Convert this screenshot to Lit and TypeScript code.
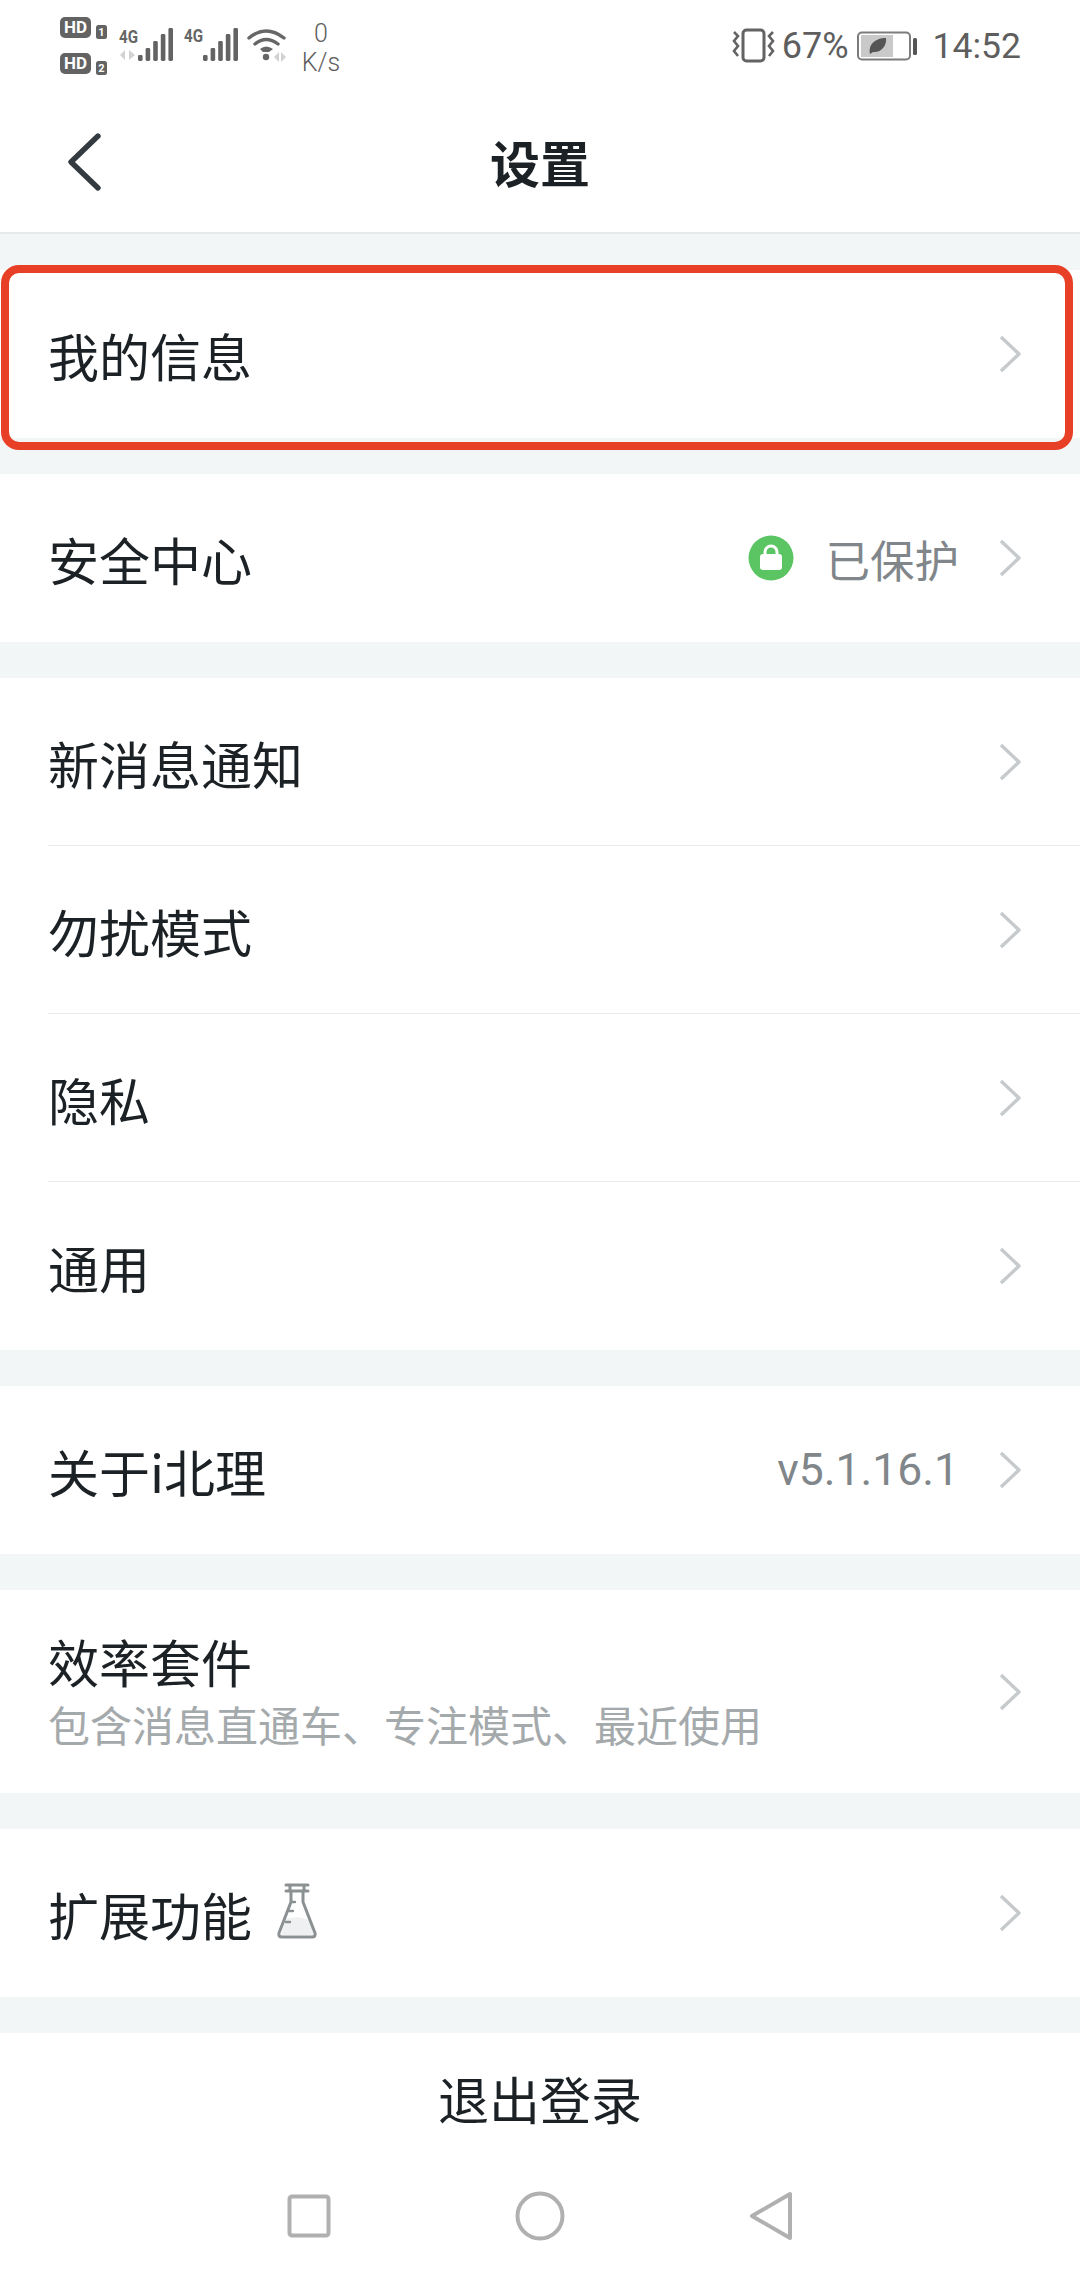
import { LitElement, html, css, svg, nothing } from 'lit';
import { customElement } from 'lit/decorators.js';

const chevron = html`<svg class="chevron" width="24" height="40" viewBox="0 0 24 40">
  <path d="M3 3 L21 20 L3 37" fill="none" stroke="#c6cacc" stroke-width="3.4" stroke-linejoin="round"/>
</svg>`;

const lockBadge = html`<svg class="lock" width="46" height="46" viewBox="0 0 46 46">
  <circle cx="23" cy="23" r="22.5" fill="#5cc563"/>
  <path d="M17 20 v-3 a6 6 0 0 1 12 0 v3" fill="none" stroke="#fff" stroke-width="3"/>
  <rect x="12" y="19" width="22" height="16" rx="3" fill="#fff"/>
</svg>`;

const flask = html`<svg class="flask" width="42" height="58" viewBox="0 0 42 58">
  <path d="M10 3 H32 M14 3 V9 M28 3 V9 M10 9 H32" fill="none" stroke="#8b9092" stroke-width="3" stroke-linecap="round"/>
  <path d="M10 37 Q21 33 33 38 L38 53 H5 Z" fill="#eef0f1"/>
  <path d="M15 9 V20 L3 51 Q2 55 6 55 H36 Q40 55 39 51 L27 20 V9" fill="none" stroke="#8b9092" stroke-width="3" stroke-linejoin="round"/>
  <path d="M15 20 H19 M13 29 H17 M10 40 H14" stroke="#8b9092" stroke-width="2.4" stroke-linecap="round"/>
</svg>`;

// signal bars, x is the leftmost bar
const bars = (x: number) => svg`${[55, 48, 41, 34, 28].map(
  (top, i) => svg`<rect x=${x + i * 7.6} y=${top} width="4.6" height=${61 - top} rx="1.4" fill="#636363"/>`
)}`;

const statusLeft = html`<svg class="status-left" width="236" height="66" viewBox="56 12 236 66">
  <g font-family="Roboto, sans-serif" font-weight="700">
    <rect x="60" y="17" width="31" height="21" rx="5" fill="#636363"/>
    <text x="75.5" y="33" font-size="17" fill="#fff" text-anchor="middle">HD</text>
    <rect x="96" y="25" width="11" height="14" rx="2.5" fill="#636363"/>
    <text x="101.5" y="36" font-size="11" fill="#fff" text-anchor="middle">1</text>
    <rect x="60" y="53" width="31" height="21" rx="5" fill="#636363"/>
    <text x="75.5" y="69" font-size="17" fill="#fff" text-anchor="middle">HD</text>
    <rect x="96" y="61" width="11" height="14" rx="2.5" fill="#636363"/>
    <text x="101.5" y="72" font-size="11" fill="#fff" text-anchor="middle">2</text>
    <text x="119" y="43" font-size="19" fill="#666" textLength="19" lengthAdjust="spacingAndGlyphs">4G</text>
    <text x="184" y="42" font-size="19" fill="#666" textLength="19" lengthAdjust="spacingAndGlyphs">4G</text>
  </g>
  <path d="M120 55 L125 50 V60 Z M135 55 L129 50 V60 Z" fill="#d2d2d2"/>
  ${bars(138)}
  ${bars(203)}
  <g fill="none" stroke="#666" stroke-width="3.4" stroke-linecap="round">
    <path d="M249 38 Q266 24 284 38"/>
    <path d="M255 44 Q266 35 278 44"/>
  </g>
  <path d="M260 49 Q266 44 273 49 L269 52 H263 Z" fill="#666"/>
  <circle cx="266" cy="57" r="3.2" fill="#666"/>
  <path d="M274 57 L279 52 V62 Z M286 57 L281 52 V62 Z" fill="#d2d2d2"/>
</svg>`;

const vibrate = html`<svg class="vibrate" width="46" height="36" viewBox="0 0 46 36">
  <rect x="11" y="2" width="21" height="31" rx="3.5" fill="none" stroke="#636363" stroke-width="3"/>
  <path d="M2 4 L6 8 L2 13 L6 18 L2 23 L6 28" fill="none" stroke="#636363" stroke-width="2.6"/>
  <path d="M41 4 L37 8 L41 13 L37 18 L41 23 L37 28" fill="none" stroke="#636363" stroke-width="2.6"/>
</svg>`;

const battery = html`<svg width="62" height="30" viewBox="0 0 62 30">
  <rect x="1" y="1.5" width="52" height="27" rx="4" fill="none" stroke="#7c7c7c" stroke-width="2"/>
  <rect x="4" y="4" width="32" height="22" fill="#c9c9c9"/>
  <path d="M13 23 C11 13 19 7 29 7 C30 15 24 22 16 21 Z" fill="#555"/>
  <rect x="56" y="7" width="4" height="17" rx="1.5" fill="#555"/>
</svg>`;

interface Row {
  label: string;
  sub?: string;
  value?: string;
  lock?: boolean;
  flask?: boolean;
}

const groups: Row[][] = [
  [{ label: '安全中心', value: '已保护', lock: true }],
  [{ label: '新消息通知' }, { label: '勿扰模式' }, { label: '隐私' }, { label: '通用' }],
  [{ label: '关于i北理', value: 'v5.1.16.1' }],
  [{ label: '效率套件', sub: '包含消息直通车、专注模式、最近使用' }],
  [{ label: '扩展功能', flask: true }],
];

@customElement('app-root')
export class AppRoot extends LitElement {
  static styles = css`
    :host {
      display: flex;
      flex-direction: column;
      width: 1080px;
      height: 2280px;
      overflow: hidden;
      background: #f2f6f7;
      font-family: 'Noto Sans CJK SC', 'Noto Sans', sans-serif;
      color: #1b2125;
    }

    .status {
      display: flex;
      align-items: flex-start;
      justify-content: space-between;
      height: 92px;
      padding: 12px 59px 0 56px;
      box-sizing: border-box;
      background: #fff;
      color: #5e5e5e;
      font-family: Roboto, sans-serif;
    }

    .status-group {
      display: flex;
      align-items: center;
    }

    .speed {
      display: flex;
      flex-direction: column;
      align-items: center;
      width: 40px;
      margin: 6px 0 0 9px;
      font-size: 25px;
      font-weight: 300;
      line-height: 29px;
    }

    .status-right {
      gap: 6px;
      height: 46px;
      margin-top: 11px;
      font-size: 36px;
    }

    .vibrate {
      margin-right: -2px;
    }

    .percent {
      margin-right: 2px;
    }

    .time {
      margin-left: 8px;
      font-size: 35.5px;
    }

    .nav {
      display: grid;
      grid-template-columns: 1fr auto 1fr;
      align-items: center;
      height: 140px;
      padding-left: 67px;
      padding-right: 67px;
      background: #fff;
      border-bottom: 2px solid #e6eaeb;
    }

    .back {
      display: block;
    }

    .title {
      margin-top: -2px;
      font-size: 50px;
      font-weight: 700;
    }

    .first {
      margin-top: 36px;
    }

    .group {
      background: #fff;
      margin-bottom: 36px;
    }

    .row {
      display: flex;
      align-items: center;
      position: relative;
      min-height: 168px;
      padding: 0 58px 0 48px;
      box-sizing: border-box;
    }

    .row.tall {
      min-height: 203px;
    }

    .row.highlighted {
      min-height: 172px;
      padding-bottom: 4px;
      margin-bottom: -4px;
    }

    .row + .row::before {
      content: '';
      position: absolute;
      top: -1px;
      left: 48px;
      right: 0;
      height: 1px;
      background: #e6eced;
    }

    .outline {
      position: absolute;
      top: -5px;
      bottom: -8px;
      left: 1px;
      right: 7px;
      border: 8px solid #e84026;
      border-radius: 18px;
    }

    .text {
      flex: 1;
      min-width: 0;
    }

    .label {
      display: flex;
      align-items: center;
      padding-top: 1px;
      font-size: 51px;
      line-height: 60px;
    }

    .sub {
      margin-top: 4px;
      font-size: 42px;
      line-height: 58px;
      color: #a4a9ac;
    }

    .flask {
      margin: -6px 0 0 24px;
    }

    .value {
      margin-right: 39px;
      font-size: 44.5px;
      color: #80868a;
    }

    .value.version {
      font-family: Roboto, sans-serif;
    }

    .lock {
      margin-right: 31px;
    }

    .chevron {
      flex: none;
    }

    .footer {
      flex: 1;
      display: flex;
      flex-direction: column;
      align-items: center;
      background: #fff;
    }

    .logout {
      padding-top: 30px;
      font-size: 51px;
      line-height: 70px;
    }

    .softkeys {
      display: flex;
      align-items: center;
      gap: 184px;
      margin-top: 58px;
    }
  `;

  render() {
    return html`
      ${this.renderStatus()}
      <header class="nav">
        <svg class="back" width="36" height="60" viewBox="0 0 36 60">
          <path d="M31 4 L4 30 L31 56" fill="none" stroke="#333a40" stroke-width="5.4" stroke-linecap="round" stroke-linejoin="round"/>
        </svg>
        <div class="title">设置</div>
      </header>
      <div class="group first">
        <div class="row highlighted">
          <div class="text"><div class="label">我的信息</div></div>
          ${chevron}
          <div class="outline"></div>
        </div>
      </div>
      ${groups.map(
        (rows) => html`<div class="group">${rows.map((r) => this.renderRow(r))}</div>`
      )}
      ${this.renderFooter()}
    `;
  }

  private renderStatus() {
    return html`<div class="status">
      <div class="status-group">
        ${statusLeft}
        <div class="speed"><span>0</span><span>K/s</span></div>
      </div>
      <div class="status-group status-right">
        ${vibrate}
        <span class="percent">67%</span>
        ${battery}
        <span class="time">14:52</span>
      </div>
    </div>`;
  }

  private renderRow(r: Row) {
    return html`<div class="row ${r.sub ? 'tall' : ''}">
      <div class="text">
        <div class="label">${r.label}${r.flask ? flask : nothing}</div>
        ${r.sub ? html`<div class="sub">${r.sub}</div>` : nothing}
      </div>
      ${r.lock ? lockBadge : nothing}
      ${r.value
        ? html`<span class="value ${r.lock ? '' : 'version'}">${r.value}</span>`
        : nothing}
      ${chevron}
    </div>`;
  }

  private renderFooter() {
    return html`<div class="footer">
      <div class="logout">退出登录</div>
      <div class="softkeys">
        <svg width="44" height="44" viewBox="0 0 44 44">
          <rect x="2.5" y="2.5" width="39" height="39" rx="2.5" fill="none" stroke="#b0b0b0" stroke-width="4"/>
        </svg>
        <svg width="50" height="50" viewBox="0 0 50 50">
          <circle cx="25" cy="25" r="22.5" fill="none" stroke="#b0b0b0" stroke-width="4"/>
        </svg>
        <svg width="44" height="50" viewBox="0 0 44 50">
          <path d="M41 3 V47 L3 25 Z" fill="none" stroke="#b0b0b0" stroke-width="4" stroke-linejoin="round"/>
        </svg>
      </div>
    </div>`;
  }
}
